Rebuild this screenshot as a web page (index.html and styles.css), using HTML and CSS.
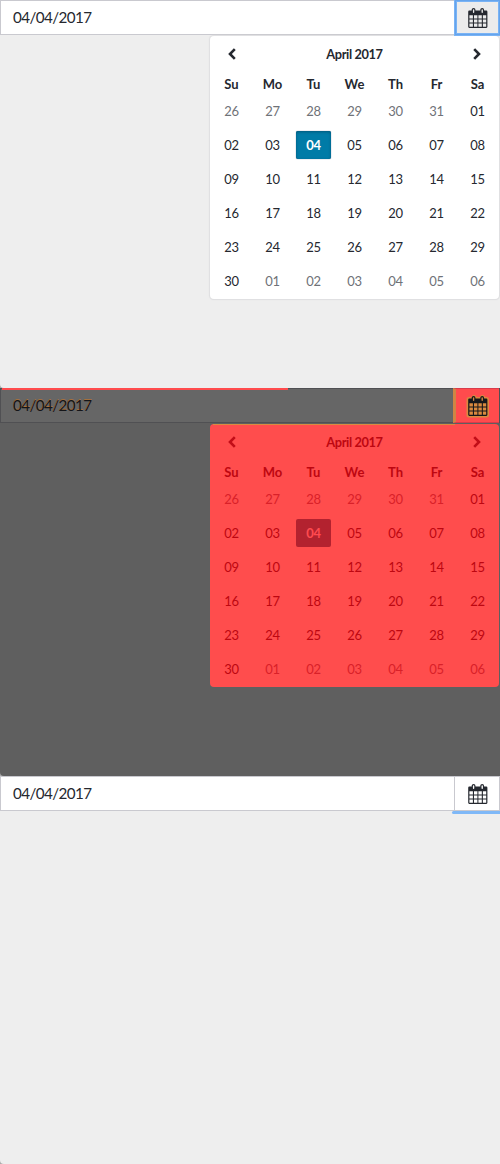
FILE: index.html
```
<!DOCTYPE html>
<html lang="en">
<head>
<meta charset="utf-8">
<title>Date picker</title>
<link rel="stylesheet" href="styles.css">
</head>
<body>
<svg class="defs" width="0" height="0">
  <symbol id="cal" viewBox="0 0 24 24">
    <path class="halo" d="M3 5.500H20.500V21H3ZM8 3.500V6M16.500 3.500V6"/>
    <path class="ink" fill-rule="evenodd" d="M3.300 4.600H20.300Q21.400 4.600 21.400 5.700V20.800Q21.400 21.900 20.300 21.900H3.300Q2.200 21.900 2.200 20.800V5.700Q2.200 4.600 3.300 4.600ZM3.400 9.300V12.500H6.900V9.300ZM8 9.300V12.500H11.400V9.300ZM12.400 9.300V12.500H15.800V9.300ZM16.900 9.300V12.500H20.200V9.300ZM3.400 13.500V16.600H6.900V13.500ZM8 13.500V16.600H11.400V13.500ZM12.400 13.500V16.600H15.800V13.500ZM16.900 13.500V16.600H20.200V13.500ZM3.400 17.600V20.700H6.900V17.600ZM8 17.600V20.700H11.400V17.600ZM12.400 17.600V20.700H15.800V17.600ZM16.900 17.600V20.700H20.200V17.600Z"/>
    <rect class="ring" x="6.300" y="2.600" width="2.600" height="5" rx="1.300"/>
    <rect class="ring" x="14.900" y="2.600" width="2.600" height="5" rx="1.300"/>
  </symbol>
  <symbol id="prev" viewBox="0 0 10 12"><path class="chev" d="M7.800 1.200 3 6l4.800 4.800"/></symbol>
  <symbol id="next" viewBox="0 0 10 12"><path class="chev" d="M2.200 1.200 7 6l-4.800 4.800"/></symbol>
</svg>

<section class="panel open">
  <div class="field"><span class="value">04/04/2017</span><button class="toggle"><svg width="24" height="24"><use href="#cal"/></svg></button></div>
  <div class="calendar">
    <div class="head"><svg width="10" height="12"><use href="#prev"/></svg><b>April 2017</b><svg width="10" height="12"><use href="#next"/></svg></div>
    <div class="week"><b>Su</b><b>Mo</b><b>Tu</b><b>We</b><b>Th</b><b>Fr</b><b>Sa</b></div>
    <div class="days">
      <i>26</i><i>27</i><i>28</i><i>29</i><i>30</i><i>31</i><span>01</span>
      <span>02</span><span>03</span><span class="selected">04</span><span>05</span><span>06</span><span>07</span><span>08</span>
      <span>09</span><span>10</span><span>11</span><span>12</span><span>13</span><span>14</span><span>15</span>
      <span>16</span><span>17</span><span>18</span><span>19</span><span>20</span><span>21</span><span>22</span>
      <span>23</span><span>24</span><span>25</span><span>26</span><span>27</span><span>28</span><span>29</span>
      <span>30</span><i>01</i><i>02</i><i>03</i><i>04</i><i>05</i><i>06</i>
    </div>
  </div>
</section>

<section class="panel diff">
  <div class="field"><span class="value">04/04/2017</span><button class="toggle"><svg width="24" height="24"><use href="#cal"/></svg></button></div>
  <div class="calendar">
    <div class="head"><svg width="10" height="12"><use href="#prev"/></svg><b>April 2017</b><svg width="10" height="12"><use href="#next"/></svg></div>
    <div class="week"><b>Su</b><b>Mo</b><b>Tu</b><b>We</b><b>Th</b><b>Fr</b><b>Sa</b></div>
    <div class="days">
      <i>26</i><i>27</i><i>28</i><i>29</i><i>30</i><i>31</i><span>01</span>
      <span>02</span><span>03</span><span class="selected">04</span><span>05</span><span>06</span><span>07</span><span>08</span>
      <span>09</span><span>10</span><span>11</span><span>12</span><span>13</span><span>14</span><span>15</span>
      <span>16</span><span>17</span><span>18</span><span>19</span><span>20</span><span>21</span><span>22</span>
      <span>23</span><span>24</span><span>25</span><span>26</span><span>27</span><span>28</span><span>29</span>
      <span>30</span><i>01</i><i>02</i><i>03</i><i>04</i><i>05</i><i>06</i>
    </div>
  </div>
</section>

<section class="panel closed">
  <div class="field"><span class="value">04/04/2017</span><button class="toggle"><svg width="24" height="24"><use href="#cal"/></svg></button></div>
</section>
</body>
</html>
```
FILE: styles.css
```
* { box-sizing: border-box; }
body {
  margin: 0;
  width: 500px;
  background: #aaa;
  color: #25282f;
  font-family: Lato, sans-serif;
}
.defs { position: absolute; }
.panel {
  --ink: #25282f;
  --ring: #fff;
  --halo: none;
  position: relative;
  height: 388px;
  overflow: hidden;
  background: #eee;
  border-bottom-left-radius: 4px;
}
.field {
  display: flex;
  height: 35px;
  background: #fff;
  border: 1px solid #c9c9cf;
}
.value {
  flex: 1;
  padding-left: 12px;
  font-size: 15.2px;
  line-height: 32px;
  letter-spacing: -0.58px;
}
.toggle {
  display: flex;
  align-items: center;
  justify-content: center;
  width: 45px;
  padding: 1px 0 0 2px;
  border: 0;
  border-left: 1px solid #c9c9cf;
  background: #fff;
}
.ink { fill: var(--ink); }
.ring { fill: var(--ring); stroke: var(--ink); stroke-width: 1.2; }
.halo { fill: var(--halo); stroke: var(--halo); stroke-width: 5; stroke-linejoin: round; stroke-linecap: round; }
.chev { fill: none; stroke: var(--ink); stroke-width: 2.6; }

.calendar {
  width: 289px;
  height: 263px;
  margin: 1px 0 0 210px;
  padding: 0 1px;
  border-radius: 4px;
  background: #fff;
  box-shadow: 0 0 1px 0.5px #dedee0;
  font-size: 13px;
}
.head {
  display: flex;
  align-items: center;
  justify-content: space-between;
  height: 35px;
  margin-bottom: 1px;
  padding: 0 16px;
}
.head b { font-size: 12.8px; letter-spacing: -0.38px; }
.week, .days { display: grid; grid-template-columns: repeat(7, 41px); text-align: center; }
.week { height: 22px; line-height: 24px; }
.days { grid-auto-rows: 34px; line-height: 34px; letter-spacing: -0.3px; }
.days i { font-style: normal; color: #6f7278; }
.days .selected {
  width: 35px;
  height: 28px;
  margin: 3px;
  border-radius: 2px;
  background: #007ba7;
  box-shadow: inset 0 1px 3px #00587a, 0 0 1px #557;
  color: #fff;
  font-weight: 700;
  line-height: 28px;
}

.open .toggle {
  --ring: #ececec;
  position: relative;
  width: 43px;
  padding-left: 1px;
  background: #ececec;
  border: 0;
  box-shadow: 0 0 0 1px #65a4ec, 0 0 0 2px #79b3f5, inset 0 0 0 1px #79b3f5;
}

.diff {
  --ink: #15171b;
  --ring: #d08a45;
  --halo: #d9893f;
  background: #5f5f5f;
}
.diff .field { background: #666; border-color: #505053; }
.diff .value { color: #141519; text-shadow: 0 -1px 0 #a8703c; }
.diff .toggle {
  width: 46px;
  margin: -1px 0;
  padding-left: 0;
  background: #ff4b4d;
  border: 1px solid #d93b4b;
  border-width: 1px 0;
  border-left: 3px solid #cf8543;
}
.diff .calendar {
  --ink: #c20e18;
  background: #ff4d4d;
  color: #bd0711;
  box-shadow: none;
}
.diff .days i { color: #d92129; }
.diff .days .selected { background: #b3222f; box-shadow: none; color: #ff4b50; }
.diff::before {
  content: "";
  position: absolute;
  top: 0;
  left: 2px;
  width: 286px;
  height: 2px;
  background: #ff4b4d;
}
.diff::after {
  content: "";
  position: absolute;
  top: 36px;
  left: 213px;
  width: 242px;
  height: 1px;
  background: #d98b41;
}

.closed::after {
  content: "";
  position: absolute;
  top: 35px;
  left: 452px;
  width: 52px;
  height: 3px;
  border-radius: 2px;
  background: #7fb8f7;
}
```
